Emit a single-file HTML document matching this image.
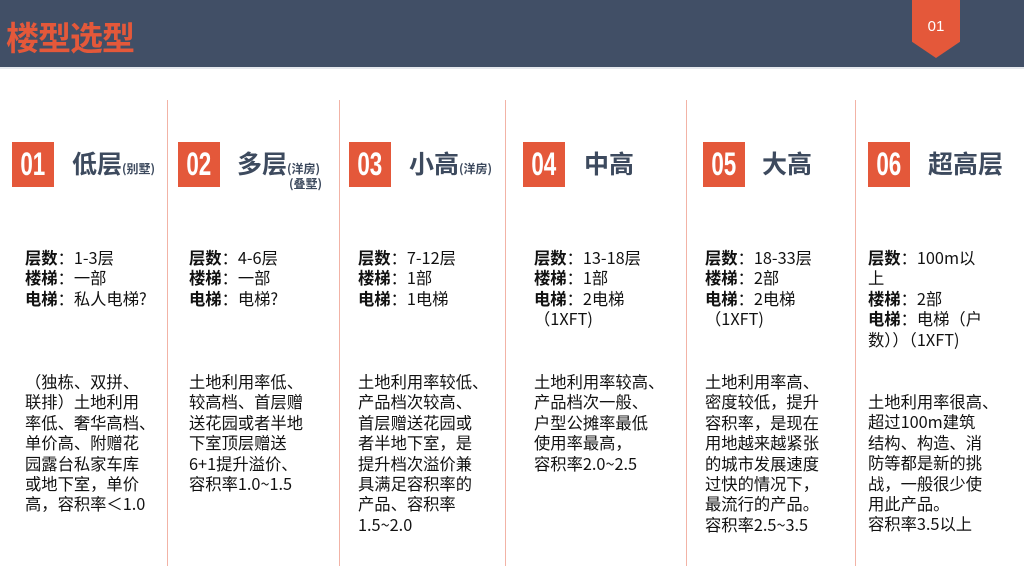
<!DOCTYPE html>
<html><head><meta charset="utf-8"><style>
*{margin:0;padding:0;box-sizing:border-box}
body{width:1024px;height:576px;background:#fff;position:relative;overflow:hidden;font-family:"Liberation Sans","Noto Sans CJK SC",sans-serif;color:#111}
.hdr{position:absolute;left:0;top:0;width:1024px;height:69px;background:#414f66;border-bottom:2px solid #e6e9ee}
.ttl{position:absolute;left:6px;top:16px;font-size:33px;line-height:40px;font-weight:bold;color:#e4583a;letter-spacing:-1px;font-family:"Noto Sans CJK SC",sans-serif}
.tab{position:absolute;left:912px;top:0;width:48px;height:58px;background:#e4583a;clip-path:polygon(0 0,100% 0,100% 72%,50% 100%,0 72%)}
.tab span{position:absolute;width:100%;top:18px;text-align:center;color:#fff;font-size:15px}
.dv{position:absolute;top:100px;height:466px;width:1px;background:#f2b3a6}
.box{position:absolute;top:142px;width:42px;height:45px;background:#e4583a;color:#fff;font-weight:bold;font-size:32px;text-align:center;line-height:45px}
.box span{display:inline-block;transform:scaleX(.7)}
.h{position:absolute;top:146px;font-size:25px;line-height:34px;font-weight:bold;color:#3d4a5e;white-space:nowrap;font-family:"Noto Sans CJK SC",sans-serif}
.h small{font-size:12px}
.t{position:absolute;font-size:16.3px;line-height:20.4px;white-space:nowrap;font-family:"Noto Sans CJK SC",sans-serif}
.t b{font-weight:bold}
</style></head><body>
<div class="hdr"><div class="ttl">楼型选型</div></div>
<div class="tab"><span>01</span></div>
<div class="dv" style="left:167px"></div>
<div class="dv" style="left:339px"></div>
<div class="dv" style="left:505px"></div>
<div class="dv" style="left:686px"></div>
<div class="dv" style="left:855px"></div>

<div class="box" style="left:12px"><span>01</span></div>
<div class="box" style="left:178px"><span>02</span></div>
<div class="box" style="left:349px"><span>03</span></div>
<div class="box" style="left:523px"><span>04</span></div>
<div class="box" style="left:703px"><span>05</span></div>
<div class="box" style="left:868px"><span>06</span></div>

<div class="h" style="left:72px">低层<small>(别墅)</small></div>
<div class="h" style="left:237px">多层<small>(洋房)</small></div>
<div class="h" style="left:289px;top:174px;font-size:12px;line-height:20px">(叠墅)</div>
<div class="h" style="left:409px">小高<small>(洋房)</small></div>
<div class="h" style="left:584px">中高</div>
<div class="h" style="left:762px">大高</div>
<div class="h" style="left:928px">超高层</div>

<div class="t" style="left:25px;top:247px"><b>层数</b>：1-3层<br><b>楼梯</b>：一部<br><b>电梯</b>：私人电梯?</div>
<div class="t" style="left:189px;top:247px"><b>层数</b>：4-6层<br><b>楼梯</b>：一部<br><b>电梯</b>：电梯?</div>
<div class="t" style="left:358px;top:247px"><b>层数</b>：7-12层<br><b>楼梯</b>：1部<br><b>电梯</b>：1电梯</div>
<div class="t" style="left:534px;top:247px"><b>层数</b>：13-18层<br><b>楼梯</b>：1部<br><b>电梯</b>：2电梯<br>（1XFT)</div>
<div class="t" style="left:705px;top:247px"><b>层数</b>：18-33层<br><b>楼梯</b>：2部<br><b>电梯</b>：2电梯<br>（1XFT)</div>
<div class="t" style="left:868px;top:247px"><b>层数</b>：100m以<br>上<br><b>楼梯</b>：2部<br><b>电梯</b>：电梯（户<br>数））（1XFT)</div>

<div class="t" style="left:25px;top:371px">（独栋、双拼、<br>联排）土地利用<br>率低、奢华高档、<br>单价高、附赠花<br>园露台私家车库<br>或地下室，单价<br>高，容积率＜1.0</div>
<div class="t" style="left:189px;top:371px">土地利用率低、<br>较高档、首层赠<br>送花园或者半地<br>下室顶层赠送<br>6+1提升溢价、<br>容积率1.0~1.5</div>
<div class="t" style="left:358px;top:371px">土地利用率较低、<br>产品档次较高、<br>首层赠送花园或<br>者半地下室，是<br>提升档次溢价兼<br>具满足容积率的<br>产品、容积率<br>1.5~2.0</div>
<div class="t" style="left:534px;top:371px">土地利用率较高、<br>产品档次一般、<br>户型公摊率最低<br>使用率最高，<br>容积率2.0~2.5</div>
<div class="t" style="left:705px;top:371px">土地利用率高、<br>密度较低，提升<br>容积率，是现在<br>用地越来越紧张<br>的城市发展速度<br>过快的情况下，<br>最流行的产品。<br>容积率2.5~3.5</div>
<div class="t" style="left:868px;top:391px">土地利用率很高、<br>超过100m建筑<br>结构、构造、消<br>防等都是新的挑<br>战，一般很少使<br>用此产品。<br>容积率3.5以上</div>
</body></html>
